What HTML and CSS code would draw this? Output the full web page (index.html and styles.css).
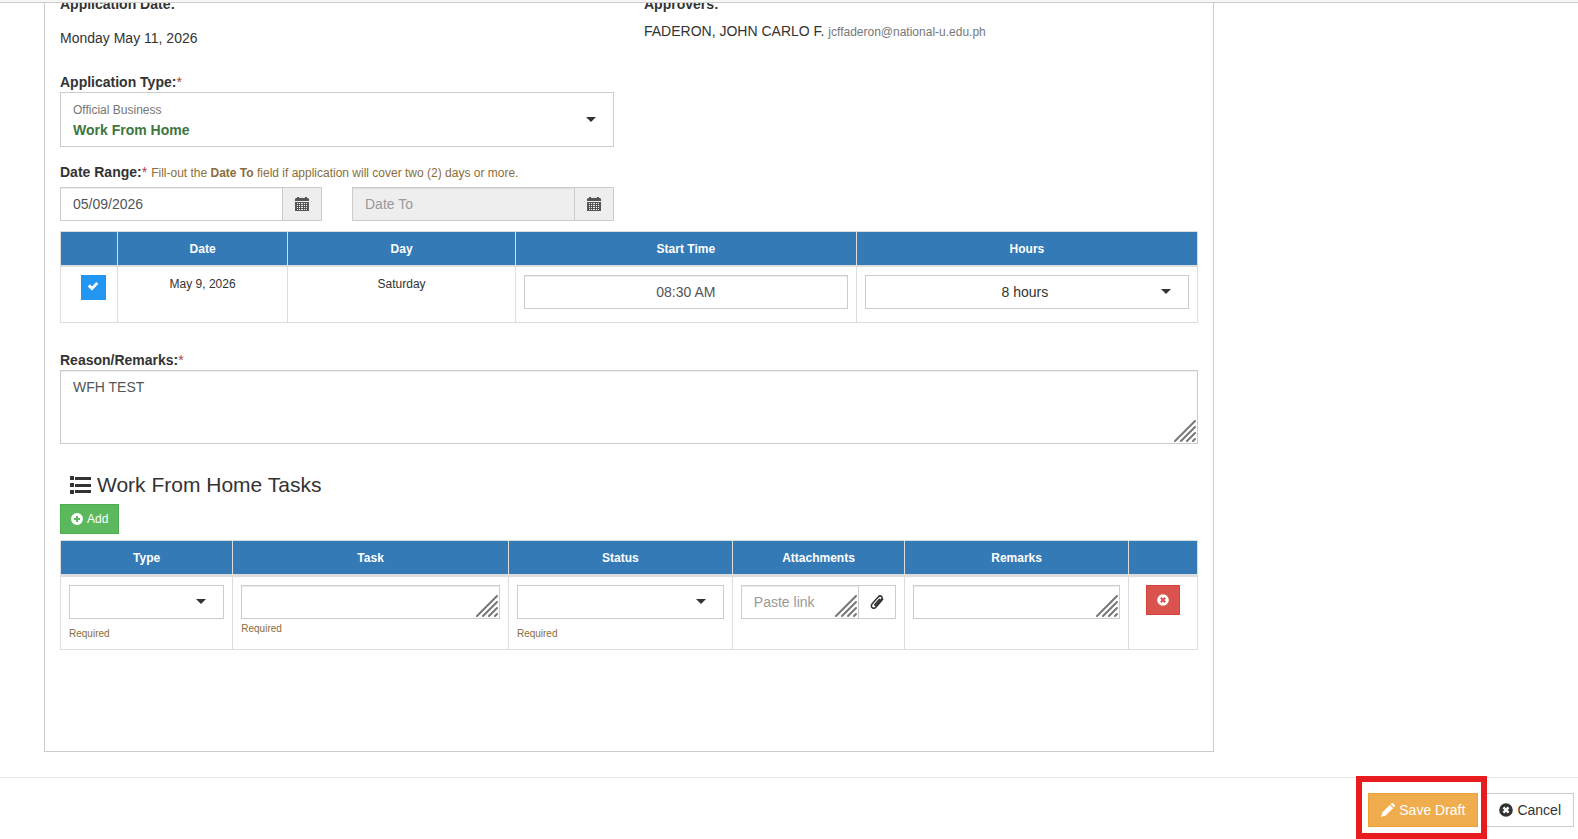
FILE: index.html
```
<!DOCTYPE html>
<html lang="en">
<head>
    <meta charset="UTF-8">
    <meta name="viewport" content="width=device-width, initial-scale=1.0">
    <title>Official Business Application</title>
    <link rel="stylesheet" href="styles.css">
</head>
<body>

<!-- Shared icons -->
<svg class="sprite" aria-hidden="true">
    <symbol id="calendar" viewBox="0 0 14 14">
        <path d="M0 2l1-1h1V0h2v1h6V0h2v1h1l1 1v2H0z"/>
        <path fill-rule="evenodd" d="M0 5h14v9H0zM2 6v1h1V6zM4 6v1h1V6zM6 6v1h2V6zM9 6v1h1V6zM11 6v1h1V6zM2 8v1h1V8zM4 8v1h1V8zM6 8v1h2V8zM9 8v1h1V8zM11 8v1h1V8zM2 10v1h1v-1zM4 10v1h1v-1zM6 10v1h2v-1zM9 10v1h1v-1zM11 10v1h1v-1zM2 12v1h1v-1zM4 12v1h1v-1zM6 12v1h2v-1zM9 12v1h1v-1zM11 12v1h1v-1z"/>
    </symbol>
    <symbol id="list" viewBox="0 0 21 18">
        <path d="M0 0h4v4H0zM5 1h16v3H5zM0 7h4v4H0zM5 8h16v3H5zM0 14h4v4H0zM5 14h16v3H5z"/>
    </symbol>
    <symbol id="plus" viewBox="0 0 12 12">
        <path fill-rule="evenodd" d="M6 0a6 6 0 1 0 0 12A6 6 0 0 0 6 0zM5 3h2v2h2v2H7v2H5V7H3V5h2z"/>
    </symbol>
    <symbol id="remove" viewBox="0 0 14 14">
        <path fill-rule="evenodd" d="M7 .2a6.800 6.800 0 1 0 0 13.600A6.800 6.800 0 0 0 7 .2zM5.300 3.600 7 5.300l1.700-1.700 1.700 1.700L8.700 7l1.700 1.700-1.700 1.700L7 8.700l-1.700 1.700-1.700-1.700L5.300 7 3.600 5.300z"/>
    </symbol>
    <symbol id="check" viewBox="0 0 12 12">
        <path d="M.7 6.500 2.900 4.300 5 6.400 9.300 2l2 2L5 10.500z"/>
    </symbol>
    <symbol id="pencil" viewBox="0 0 14 14">
        <path d="M10.300.5a1.500 1.500 0 0 1 2 0l1.200 1.200a1.500 1.500 0 0 1 0 2l-.8.8-3.200-3.200zM8.800 2 12 5.200l-7.300 7.300L0 14l1.500-4.700z"/>
    </symbol>
    <symbol id="paperclip" viewBox="0 0 14 14">
        <path fill="none" stroke="currentColor" stroke-width="1.500" stroke-linecap="round" stroke-linejoin="round" d="M9.500 4.200 5.100 9.300c-.7 1 .5 1.800 1.300.9l4.900-5.700c1.200-1.400.9-2.500.1-3.100-.9-.7-2.200-.6-3.200.6L2.400 8.600c-1.400 1.700-1.200 3.200-.2 4.100 1.100.9 2.600.7 3.900-.7l6.600-7.800"/>
    </symbol>
    <symbol id="grip" viewBox="0 0 22 22">
        <path fill="none" stroke="#777" stroke-width="2" stroke-linecap="round" d="M1 21 21 1M7 21 21 7M13 21l8-8M19 21l2-2"/>
    </symbol>
</svg>

<div class="topbar"></div>

<main class="content">
    <form class="panel" id="applicationForm">
        <div class="row">
            <div>
                <strong class="title">Application Date:</strong>
                <p class="app-date">Monday May 11, 2026</p>

                <label class="title" for="appType">Application Type:<span class="required">*</span></label>
                <div class="select app-type">
                    <span class="category">Official Business</span>
                    <select id="appType">
                        <option>Work From Home</option>
                    </select>
                </div>

                <div class="range-label">
                    <label class="title" for="dateFrom">Date Range:<span class="required">*</span></label>
                    <span class="hint">Fill-out the <strong>Date To</strong> field if application will cover two (2) days or more.</span>
                </div>
                <div class="row">
                    <div class="input-group">
                        <input type="text" class="control" id="dateFrom" value="05/09/2026">
                        <span class="addon"><svg class="icon"><use href="#calendar"/></svg></span>
                    </div>
                    <div class="input-group">
                        <input type="text" class="control" id="dateTo" placeholder="Date To" aria-label="Date To" disabled>
                        <span class="addon"><svg class="icon"><use href="#calendar"/></svg></span>
                    </div>
                </div>
            </div>
            <div>
                <strong class="title">Approvers:</strong>
                <p class="approver">FADERON, JOHN CARLO F. <small>jcffaderon@national-u.edu.ph</small></p>
            </div>
        </div>

        <table class="dates">
            <colgroup>
                <col class="w5"><col class="w15"><col class="w20"><col class="w30"><col class="w30">
            </colgroup>
            <thead>
                <tr>
                    <th></th>
                    <th>Date</th>
                    <th>Day</th>
                    <th>Start Time</th>
                    <th>Hours</th>
                </tr>
            </thead>
            <tbody>
                <tr>
                    <td>
                        <label class="tick">
                            <input type="checkbox" aria-label="Include May 9, 2026" checked>
                            <svg><use href="#check"/></svg>
                        </label>
                    </td>
                    <td>May 9, 2026</td>
                    <td>Saturday</td>
                    <td><input type="text" class="control time" value="08:30 AM" aria-label="Start Time"></td>
                    <td>
                        <div class="select hours">
                            <select aria-label="Hours">
                                <option>8 hours</option>
                            </select>
                        </div>
                    </td>
                </tr>
            </tbody>
        </table>

        <label class="title" for="reason">Reason/Remarks:<span class="required">*</span></label>
        <div class="area">
            <textarea class="control reason" id="reason">WFH TEST</textarea>
            <svg class="grip"><use href="#grip"/></svg>
        </div>

        <h3><svg class="list-icon"><use href="#list"/></svg>Work From Home Tasks</h3>
        <button type="button" class="btn btn-sm btn-success"><svg class="icon-sm"><use href="#plus"/></svg>Add</button>

        <table class="tasks">
            <colgroup>
                <col class="type"><col class="task"><col class="status"><col class="type"><col class="status"><col class="action">
            </colgroup>
            <thead>
                <tr>
                    <th>Type</th>
                    <th>Task</th>
                    <th>Status</th>
                    <th>Attachments</th>
                    <th>Remarks</th>
                    <th></th>
                </tr>
            </thead>
            <tbody>
                <tr>
                    <td>
                        <div class="select spaced"><select aria-label="Type"><option></option></select></div>
                        <div class="help">Required</div>
                    </td>
                    <td>
                        <div class="area">
                            <textarea class="control" rows="1" aria-label="Task"></textarea>
                            <svg class="grip"><use href="#grip"/></svg>
                        </div>
                        <div class="help">Required</div>
                    </td>
                    <td>
                        <div class="select spaced"><select aria-label="Status"><option></option></select></div>
                        <div class="help">Required</div>
                    </td>
                    <td>
                        <div class="input-group">
                            <div class="area">
                                <textarea class="control" rows="1" placeholder="Paste link" aria-label="Attachment link"></textarea>
                                <svg class="grip"><use href="#grip"/></svg>
                            </div>
                            <button type="button" class="btn btn-default attach" aria-label="Attach file"><svg class="icon"><use href="#paperclip"/></svg></button>
                        </div>
                    </td>
                    <td>
                        <div class="area">
                            <textarea class="control" rows="1" aria-label="Remarks"></textarea>
                            <svg class="grip"><use href="#grip"/></svg>
                        </div>
                    </td>
                    <td class="center">
                        <button type="button" class="btn btn-sm btn-danger" aria-label="Remove task"><svg class="icon-sm"><use href="#remove"/></svg></button>
                    </td>
                </tr>
            </tbody>
        </table>
    </form>
</main>

<footer class="footer">
    <div class="highlight">
        <button type="submit" form="applicationForm" class="btn btn-warning"><svg class="icon"><use href="#pencil"/></svg>Save Draft</button>
    </div>
    <button type="button" class="btn btn-default"><svg class="icon"><use href="#remove"/></svg>Cancel</button>
</footer>

</body>
</html>
```
FILE: styles.css
```
* {
    box-sizing: border-box;
}
body {
    margin: 0;
    min-height: 100vh;
    display: flex;
    flex-direction: column;
    font-family: "Liberation Sans", Arial, sans-serif;
    font-size: 14px;
    line-height: 20px;
    color: #333;
    background-color: #fff;
}
p, h3 {
    margin: 0;
}
.sprite {
    position: absolute;
    width: 0;
    height: 0;
}
svg {
    fill: currentColor;
    flex: none;
}
.icon {
    width: 14px;
    height: 14px;
}
.icon-sm {
    width: 12px;
    height: 12px;
}
.topbar {
    height: 3px;
    background-color: #f8f8f8;
    border-bottom: 1px solid #ccc;
}
.content {
    flex: 1;
    overflow: hidden;
    padding: 0 44px;
}

/* Panel is scrolled up under the top bar */
.panel {
    max-width: 1170px;
    margin-top: -25px;
    padding: 15px 15px 101px;
    border: 1px solid #ccc;
}
.row {
    display: grid;
    grid-template-columns: 1fr 1fr;
    gap: 30px;
}
.title {
    display: block;
    font-weight: bold;
}
.required {
    color: #a94442;
    font-weight: normal;
}
.app-date {
    margin: 14px 0 24px;
}
.approver {
    margin-top: 7px;
}
small {
    font-size: 12px;
    color: #777;
}
.range-label {
    display: flex;
    align-items: baseline;
    gap: 4px;
    margin: 15px 0 5px;
}
.hint {
    font-size: 12px;
    line-height: 17px;
    color: #8a6d3b;
}

/* Form controls */
.control {
    display: block;
    width: 100%;
    height: 34px;
    padding: 6px 12px;
    font: inherit;
    font-size: 14px;
    line-height: 20px;
    color: #555;
    background-color: #fff;
    border: 1px solid #ccc;
    border-radius: 0;
    box-shadow: inset 0 1px 1px rgba(0, 0, 0, 0.075);
    resize: none;
    overflow: hidden;
}
.control::placeholder {
    color: #999;
}
.control:disabled {
    background-color: #eee;
}
.input-group {
    display: flex;
}
.input-group .area {
    flex: 1;
}
.addon {
    display: flex;
    align-items: center;
    padding: 0 12px;
    color: #555;
    background-color: #eee;
    border: 1px solid #ccc;
    border-left: 0;
}
.select, .area {
    position: relative;
}
.select select {
    display: block;
    width: 100%;
    height: 34px;
    padding: 6px 16px 6px 12px;
    font: inherit;
    font-size: 14px;
    line-height: 20px;
    color: #333;
    background-color: #fff;
    border: 1px solid #ccc;
    border-radius: 0;
    appearance: none;
}
.select::after {
    content: "";
    position: absolute;
    top: calc(50% - 3px);
    right: 18px;
    border: 5px solid transparent;
    border-top-color: #333;
    border-bottom: 0;
    pointer-events: none;
}
.app-type select {
    height: 55px;
    padding: 27px 12px 6px;
    color: #3c763d;
    font-weight: bold;
}
.category {
    position: absolute;
    top: 10px;
    left: 13px;
    font-size: 12px;
    line-height: 17px;
    color: #777;
    pointer-events: none;
}
.hours select, .time {
    text-align: center;
}
.spaced {
    margin-bottom: 5px;
}
.grip {
    position: absolute;
    right: 2px;
    bottom: 2px;
    width: 22px;
    height: 22px;
    pointer-events: none;
}
.reason {
    height: 74px;
}
.help {
    padding-top: 1px;
    font-size: 10px;
    color: #8a6d3b;
}

/* Tables */
table {
    width: 100%;
    table-layout: fixed;
    border-collapse: collapse;
    font-size: 12px;
    line-height: 17px;
}
th, td {
    padding: 8px 8px 7px;
    border: 1px solid #ddd;
    vertical-align: top;
}
th {
    height: 34px;
    padding-top: 9px;
    color: #fff;
    background-color: #337ab7;
    border-bottom-width: 2px;
}
.dates {
    margin: 10px 0 27px;
}
.dates td {
    height: 56px;
    line-height: 19px;
    text-align: center;
}
.w5 {
    width: 5%;
}
.w15 {
    width: 15%;
}
.w20 {
    width: 20%;
}
.w30 {
    width: 30%;
}
.tasks {
    margin-top: 6px;
}
.tasks th {
    border-bottom-width: 3px;
}
.type {
    width: 10%;
}
.task {
    width: 16%;
}
.status {
    width: 13%;
}
.action {
    width: 4%;
}
.center {
    text-align: center;
}
.tick {
    position: relative;
    display: block;
    width: 25px;
    height: 25px;
    margin-left: 12px;
    color: #fff;
}
.tick input {
    display: block;
    width: 25px;
    height: 25px;
    margin: 0;
    appearance: none;
    border: 1px solid #ccc;
}
.tick input:checked {
    background-color: #2196f3;
    border-color: #2196f3;
}
.tick svg {
    position: absolute;
    top: 5px;
    left: 6px;
    width: 12px;
    height: 12px;
    pointer-events: none;
}

h3 {
    display: flex;
    align-items: center;
    gap: 6px;
    margin: 29px 0 7px;
    padding-left: 10px;
    font-size: 21px;
    font-weight: normal;
    line-height: 24px;
}
.list-icon {
    width: 21px;
    height: 18px;
}

/* Buttons */
.btn {
    display: inline-flex;
    align-items: center;
    gap: 4px;
    height: 34px;
    padding: 0 12px;
    font: inherit;
    font-size: 14px;
    line-height: 20px;
    color: #fff;
    border: 1px solid;
    border-radius: 0;
    cursor: pointer;
}
.btn-sm {
    height: 30px;
    padding: 0 10px;
    font-size: 12px;
}
.btn-default {
    color: #333;
    background-color: #fff;
    border-color: #ccc;
}
.btn-success {
    display: flex;
    background-color: #5cb85c;
    border-color: #4cae4c;
}
.btn-warning {
    background-color: #f0ad4e;
    border-color: #eea236;
}
.btn-danger {
    background-color: #d9534f;
    border-color: #d43f3a;
}
.attach {
    padding: 0 11px;
    border-left: 0;
}

.footer {
    display: flex;
    justify-content: flex-end;
    gap: 8px;
    padding: 15px 4px 12px;
    border-top: 1px solid #e5e5e5;
}
.highlight {
    position: relative;
}
.highlight::after {
    content: "";
    position: absolute;
    inset: -17px -9px -12px -12px;
    z-index: 1;
    border: 6px solid #e81b1e;
    pointer-events: none;
}
```
